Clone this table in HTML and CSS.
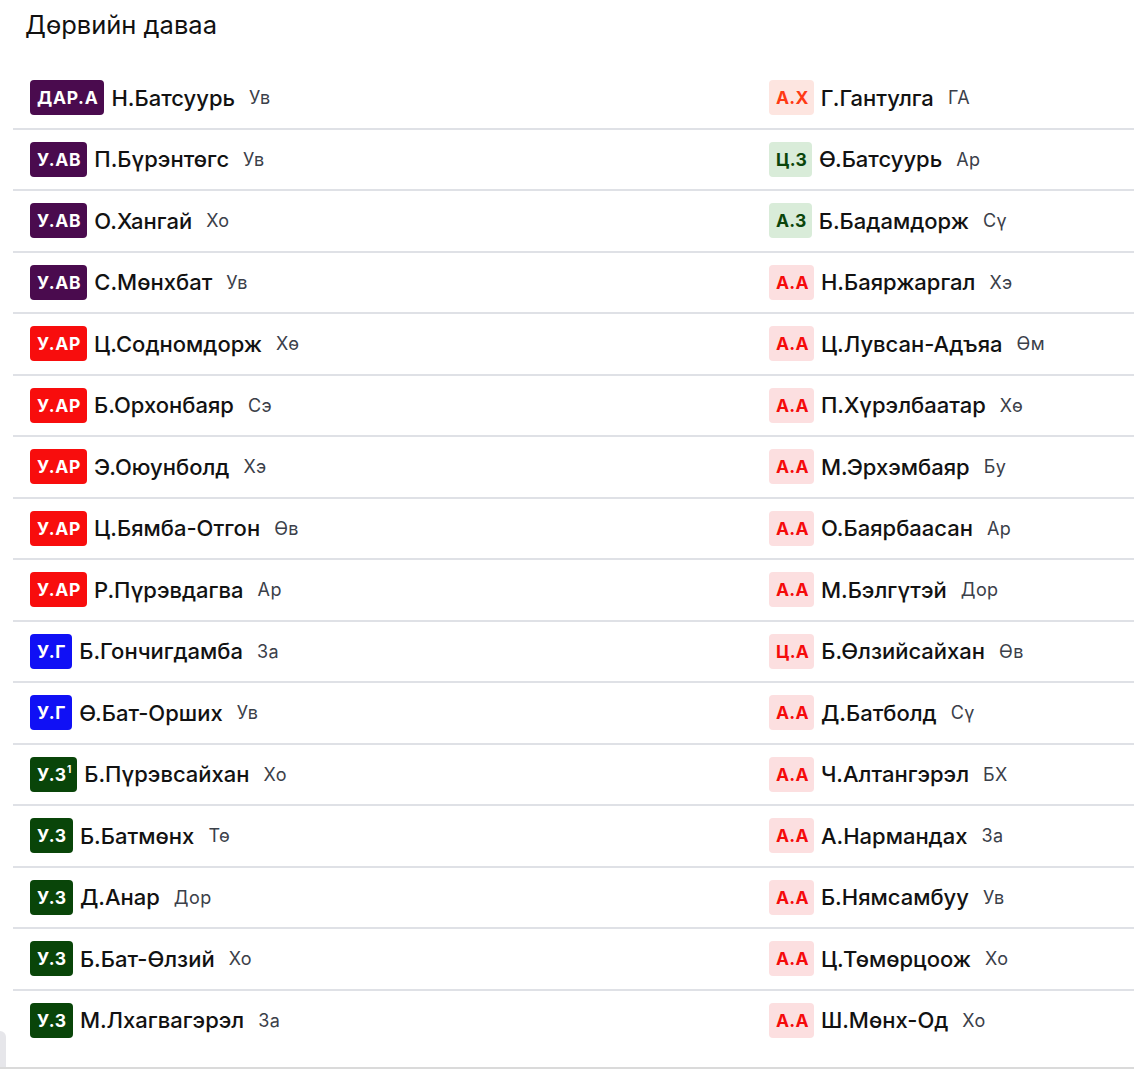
FILE: index.html
```html
<!DOCTYPE html>
<html lang="mn">
<head>
<meta charset="utf-8">
<title>Дөрвийн даваа</title>
<link rel="stylesheet" href="styles.css">
</head>
<body>
<section class="card">
  <h2 class="title">Дөрвийн даваа</h2>
  <div class="list">
    <div class="item"><span class="badge purple">ДАР.А</span><span class="name">Н.Батсуурь</span><span class="loc">Ув</span></div>
    <div class="item"><span class="badge peach">А.Х</span><span class="name">Г.Гантулга</span><span class="loc">ГА</span></div>

    <div class="item"><span class="badge purple">У.АВ</span><span class="name">П.Бүрэнтөгс</span><span class="loc">Ув</span></div>
    <div class="item"><span class="badge mint">Ц.З</span><span class="name">Ө.Батсуурь</span><span class="loc">Ар</span></div>

    <div class="item"><span class="badge purple">У.АВ</span><span class="name">О.Хангай</span><span class="loc">Хо</span></div>
    <div class="item"><span class="badge mint">А.З</span><span class="name">Б.Бадамдорж</span><span class="loc">Сү</span></div>

    <div class="item"><span class="badge purple">У.АВ</span><span class="name">С.Мөнхбат</span><span class="loc">Ув</span></div>
    <div class="item"><span class="badge pink">А.А</span><span class="name">Н.Баяржаргал</span><span class="loc">Хэ</span></div>

    <div class="item"><span class="badge red">У.АР</span><span class="name">Ц.Содномдорж</span><span class="loc">Хө</span></div>
    <div class="item"><span class="badge pink">А.А</span><span class="name">Ц.Лувсан-Адъяа</span><span class="loc">Өм</span></div>

    <div class="item"><span class="badge red">У.АР</span><span class="name">Б.Орхонбаяр</span><span class="loc">Сэ</span></div>
    <div class="item"><span class="badge pink">А.А</span><span class="name">П.Хүрэлбаатар</span><span class="loc">Хө</span></div>

    <div class="item"><span class="badge red">У.АР</span><span class="name">Э.Оюунболд</span><span class="loc">Хэ</span></div>
    <div class="item"><span class="badge pink">А.А</span><span class="name">М.Эрхэмбаяр</span><span class="loc">Бу</span></div>

    <div class="item"><span class="badge red">У.АР</span><span class="name">Ц.Бямба-Отгон</span><span class="loc">Өв</span></div>
    <div class="item"><span class="badge pink">А.А</span><span class="name">О.Баярбаасан</span><span class="loc">Ар</span></div>

    <div class="item"><span class="badge red">У.АР</span><span class="name">Р.Пүрэвдагва</span><span class="loc">Ар</span></div>
    <div class="item"><span class="badge pink">А.А</span><span class="name">М.Бэлгүтэй</span><span class="loc">Дор</span></div>

    <div class="item"><span class="badge blue">У.Г</span><span class="name">Б.Гончигдамба</span><span class="loc">За</span></div>
    <div class="item"><span class="badge pink">Ц.А</span><span class="name">Б.Өлзийсайхан</span><span class="loc">Өв</span></div>

    <div class="item"><span class="badge blue">У.Г</span><span class="name">Ө.Бат-Орших</span><span class="loc">Ув</span></div>
    <div class="item"><span class="badge pink">А.А</span><span class="name">Д.Батболд</span><span class="loc">Сү</span></div>

    <div class="item"><span class="badge green">У.З<sup class="sup">1</sup></span><span class="name">Б.Пүрэвсайхан</span><span class="loc">Хо</span></div>
    <div class="item"><span class="badge pink">А.А</span><span class="name">Ч.Алтангэрэл</span><span class="loc">БХ</span></div>

    <div class="item"><span class="badge green">У.З</span><span class="name">Б.Батмөнх</span><span class="loc">Тө</span></div>
    <div class="item"><span class="badge pink">А.А</span><span class="name">А.Нармандах</span><span class="loc">За</span></div>

    <div class="item"><span class="badge green">У.З</span><span class="name">Д.Анар</span><span class="loc">Дор</span></div>
    <div class="item"><span class="badge pink">А.А</span><span class="name">Б.Нямсамбуу</span><span class="loc">Ув</span></div>

    <div class="item"><span class="badge green">У.З</span><span class="name">Б.Бат-Өлзий</span><span class="loc">Хо</span></div>
    <div class="item"><span class="badge pink">А.А</span><span class="name">Ц.Төмөрцоож</span><span class="loc">Хо</span></div>

    <div class="item last"><span class="badge green">У.З</span><span class="name">М.Лхагвагэрэл</span><span class="loc">За</span></div>
    <div class="item last"><span class="badge pink">А.А</span><span class="name">Ш.Мөнх-Од</span><span class="loc">Хо</span></div>
  </div>
  <div class="tab"></div>
</section>
</body>
</html>
```

FILE: styles.css
```css
html, body {
  margin: 0;
  padding: 0;
  background: #ffffff;
}

body {
  font-family: Inter, "Noto Sans", "DejaVu Sans", sans-serif;
  color: #111111;
  overflow: hidden;
}

.card {
  position: relative;
  border-bottom: 2px solid #dadada;
  padding-bottom: 17px;
}

.title {
  margin: 0;
  padding: 10px 0 0 25px;
  height: 58px;
  font-size: 25.5px;
  line-height: 30px;
  font-weight: 400;
  color: #111111;
}

.list {
  margin-left: 13px;
  display: grid;
  grid-template-columns: 739px 1fr;
}

.item {
  display: flex;
  align-items: center;
  height: 59.5px;
  padding-left: 17px;
  border-bottom: 2px solid #dfe1e6;
  white-space: nowrap;
}

.item.last {
  border-bottom: none;
}

.badge {
  display: inline-flex;
  align-items: center;
  height: 35px;
  padding: 0 6px 0 7px;
  border-radius: 4px;
  font-size: 17.5px;
  font-weight: 700;
  letter-spacing: 0.7px;
  margin-right: 7px;
}

.pink, .peach, .mint {
  letter-spacing: 0.3px;
  padding-right: 5px;
}

.sup {
  font-size: 10px;
  line-height: 1;
  align-self: flex-start;
  margin-top: 7px;
  margin-left: 0;
  letter-spacing: 0;
}

.purple { background: #4a0b4e; color: #ffffff; }
.red    { background: #f80d0d; color: #ffffff; }
.blue   { background: #1010f5; color: #ffffff; }
.green  { background: #094509; color: #ffffff; }
.peach  { background: #fde5e0; color: #ff3a14; }
.mint   { background: #d9ecd9; color: #0b450b; }
.pink   { background: #fcdfe0; color: #f50b0b; }

.name {
  font-size: 22px;
  font-weight: 500;
  color: #121212;
  margin-right: 14px;
}

.loc {
  font-size: 18px;
  font-weight: 400;
  color: #3b4049;
  letter-spacing: 0.4px;
}

.tab {
  position: absolute;
  left: 0;
  bottom: 0;
  width: 6px;
  height: 36px;
  background: #e6e6ea;
  border-top-right-radius: 6px;
}
```
